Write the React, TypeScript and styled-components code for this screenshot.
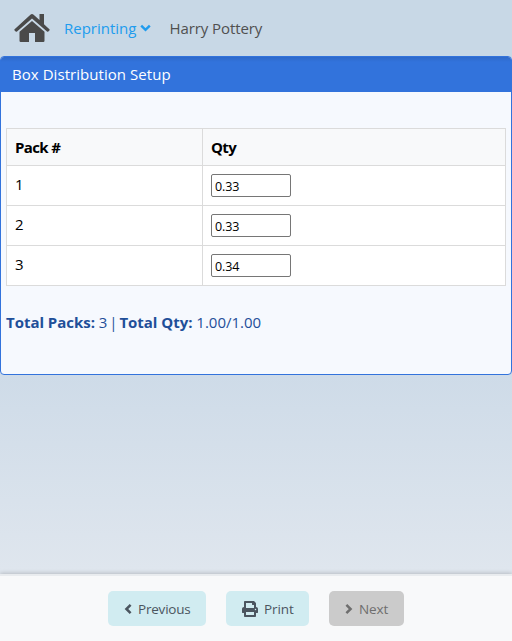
import React, { useState } from "react";
import styled, { createGlobalStyle } from "styled-components";
import { FaPrint } from "react-icons/fa";

const GlobalStyle = createGlobalStyle`
  *, *::before, *::after { box-sizing: border-box; }
  html, body { margin: 0; padding: 0; }
  body {
    font-family: "Segoe UI", "Open Sans", "Noto Sans", sans-serif;
    font-size: 15px;
    line-height: 24px;
    color: #000;
    overflow: hidden;
  }
`;

const Page = styled.div`
  display: flex;
  flex-direction: column;
  height: 100vh;
  background: linear-gradient(#c8d8e6 0, #c8d8e6 60px, #cedbe8 375px, #dfe6ee 570px);
`;

const NavBar = styled.nav`
  display: flex;
  align-items: center;
  height: 56px;
  padding: 0 14px;
  color: #4a4a4a;
  flex: none;
`;

const HomeLink = styled.a`
  display: flex;
  width: 36px;
  margin-right: 14px;
`;

const NavItem = styled.a<{ $active?: boolean; $tracking: number }>`
  display: flex;
  align-items: center;
  margin-right: 18px;
  padding-bottom: 1px;
  color: ${(p) => (p.$active ? "#209cee" : "#505050")};
  letter-spacing: ${(p) => p.$tracking}px;
`;

const MenuArrow = styled.svg`
  margin: 0 0 0 4px;
`;

const Panel = styled.section`
  flex: none;
  height: 319px;
  border: 1px solid #3273dc;
  border-radius: 4px;
  background: #f6f9fe;
  overflow: hidden;
`;

const PanelHeader = styled.header`
  height: 35px;
  padding: 5px 11px;
  color: #fff;
  background: linear-gradient(#2e69c9 0, #3273dc 5px);
  letter-spacing: 0.05px;
`;

const PanelBody = styled.div`
  padding: 36px 5px 0;
`;

const PackTable = styled.table`
  width: 500px;
  table-layout: fixed;
  border-collapse: collapse;
  background: #fff;
`;

const HeadCell = styled.th<{ $width?: number }>`
  width: ${(p) => (p.$width ? `${p.$width}px` : "auto")};
  height: 37px;
  padding: 0 8px;
  border: 1px solid #dbdbdb;
  background: #f8f9fa;
  text-align: left;
  font-weight: 700;
  letter-spacing: -0.65px;
`;

const Cell = styled.td`
  height: 40px;
  padding: 0 8px 3px;
  border: 1px solid #dbdbdb;
`;

const QtyInput = styled.input`
  display: block;
  width: 80px;
  height: 23px;
  margin-top: 3px;
  padding: 2px 3px 0;
  border: 1px solid #767676;
  border-radius: 2px;
  background: #fff;
  color: #000;
  font: 12.5px "Segoe UI", "Open Sans", "Noto Sans", sans-serif;
  letter-spacing: -0.1px;
`;

const Totals = styled.p`
  margin: 24px 0 0;
  color: #1f4f99;
  white-space: nowrap;
`;

const TotalLabel = styled.strong`
  font-weight: 700;
  letter-spacing: -0.03px;
`;

const Divider = styled.span`
  word-spacing: -2px;
`;

const Footer = styled.footer`
  display: flex;
  justify-content: center;
  align-items: flex-start;
  gap: 20px;
  flex: none;
  height: 67px;
  margin-top: auto;
  padding-top: 15px;
  border-top: 2px solid #e9ecef;
  background: #f8f9fa;
  box-shadow: 0 -1px 4px rgba(0, 0, 0, 0.18);
`;

const ActionButton = styled.button<{ $width: number; $muted?: boolean; $tracking?: number }>`
  display: flex;
  align-items: center;
  gap: 6px;
  width: ${(p) => p.$width}px;
  height: 35px;
  padding: 0 0 0 16px;
  border: 0;
  border-radius: 5px;
  background: ${(p) => (p.$muted ? "#cbcbcb" : "#d1ecf1")};
  color: ${(p) => (p.$muted ? "#6e6e6e" : "#4b555f")};
  font: 13.5px "Segoe UI", "Open Sans", "Noto Sans", sans-serif;
  letter-spacing: ${(p) => p.$tracking ?? 0}px;
  white-space: nowrap;
`;

const HomeIcon = () => (
  <svg width="36" height="28" viewBox="0 0 36 28" fill="currentColor">
    <path d="M25.5 0H30V10.2L35.4 15.2Q36 15.8 35.4 16.5L34.3 17.5Q33.7 18 33 17.4L18 4.4L3 17.4Q2.3 18 1.7 17.5L.6 16.5Q0 15.8 .6 15.2L16.4 .7Q18 -.6 19.6 .7L25.5 6Z" />
    <path d="M18 7L30.5 17.8V26.8Q30.5 28 29.3 28H21V19H15V28H6.7Q5.5 28 5.5 26.8V17.8Z" />
  </svg>
);

const ChevronIcon = ({ direction }: { direction: "left" | "right" }) => (
  <svg width="8" height="12" viewBox="0 0 8 12" fill="none" stroke="currentColor" strokeWidth="2.5">
    <path d={direction === "left" ? "M6.6 1.8L2.4 6L6.6 10.2" : "M1.4 1.8L5.6 6L1.4 10.2"} />
  </svg>
);

export default function App() {
  const [quantities, setQuantities] = useState(["0.33", "0.33", "0.34"]);
  const total = quantities.reduce((sum, q) => sum + (Number(q) || 0), 0);

  const update = (index: number, value: string) =>
    setQuantities((prev) => prev.map((q, i) => (i === index ? value : q)));

  return (
    <Page>
      <GlobalStyle />
      <NavBar>
        <HomeLink aria-label="Home">
          <HomeIcon />
        </HomeLink>
        <NavItem $active $tracking={0}>
          Reprinting
          <MenuArrow width="11" height="8" viewBox="0 0 11 8" fill="none" stroke="currentColor" strokeWidth="2.5">
            <path d="M1.2 1.7L5.5 5.8L9.8 1.7" />
          </MenuArrow>
        </NavItem>
        <NavItem $tracking={-0.08}>Harry Pottery</NavItem>
      </NavBar>
      <Panel>
        <PanelHeader>Box Distribution Setup</PanelHeader>
        <PanelBody>
          <PackTable>
            <thead>
              <tr>
                <HeadCell $width={196}>Pack #</HeadCell>
                <HeadCell>Qty</HeadCell>
              </tr>
            </thead>
            <tbody>
              {quantities.map((q, i) => (
                <tr key={i}>
                  <Cell>{i + 1}</Cell>
                  <Cell>
                    <QtyInput value={q} onChange={(e) => update(i, e.target.value)} />
                  </Cell>
                </tr>
              ))}
            </tbody>
          </PackTable>
          <Totals>
            <TotalLabel>Total Packs:</TotalLabel> {quantities.length}
            <Divider> | </Divider>
            <TotalLabel>Total Qty:</TotalLabel> {total.toFixed(2)}/1.00
          </Totals>
        </PanelBody>
      </Panel>
      <Footer>
        <ActionButton $width={98} $tracking={-0.2}>
          <ChevronIcon direction="left" />
          Previous
        </ActionButton>
        <ActionButton $width={83} $tracking={-0.1}>
          <FaPrint size={16} />
          Print
        </ActionButton>
        <ActionButton $width={75} $muted disabled $tracking={-0.1}>
          <ChevronIcon direction="right" />
          Next
        </ActionButton>
      </Footer>
    </Page>
  );
}
